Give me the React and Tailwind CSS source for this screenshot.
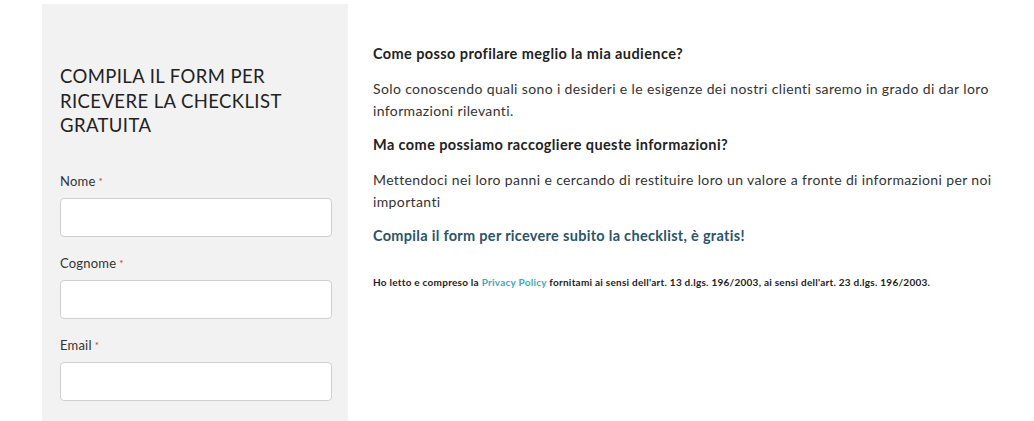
import React from "react";

const font = { fontFamily: "Lato, 'Open Sans', sans-serif" };

function Field({ label }) {
  return (
    <div className="flex flex-col">
      <label className="text-[13px] leading-[18px] text-[#333] mb-[8px] tracking-[0.2px]">
        {label}
        <span className="text-[#c0392b] text-[10px] align-top ml-[3px]">*</span>
      </label>
      <input className="h-[39px] w-[272px] bg-white border border-[#cfcfcf] rounded-[4px] outline-none" />
    </div>
  );
}

export default function App() {
  return (
    <div className="w-[1034px] h-[421px] bg-white overflow-hidden flex" style={font}>
      <div className="ml-[42px] mt-[4px] w-[306px] h-[417px] bg-[#f2f2f2] pl-[18px] pt-[60px]">
        <h2 className="text-[18.5px] leading-[24.5px] text-[#222] w-[270px] tracking-[0.4px]">
          COMPILA IL FORM PER RICEVERE LA CHECKLIST GRATUITA
        </h2>
        <div className="mt-[34px] flex flex-col gap-[17px]">
          <Field label="Nome" />
          <Field label="Cognome" />
          <Field label="Email" />
        </div>
      </div>
      <div className="ml-[25px] pt-[43px] w-[630px] text-[14px] text-[#333] tracking-[0.37px]">
        <p className="font-bold text-[#222] leading-[22px] text-[14.5px] tracking-[0.4px]">Come posso profilare meglio la mia audience?</p>
        <p className="mt-[13px] leading-[22px]">
          Solo conoscendo quali sono i desideri e le esigenze dei nostri clienti saremo in grado di dar loro informazioni rilevanti.
        </p>
        <p className="mt-[12px] font-bold text-[#222] leading-[22px] text-[14.5px] tracking-[0.4px]">Ma come possiamo raccogliere queste informazioni?</p>
        <p className="mt-[13px] leading-[22px]">
          Mettendoci nei loro panni e cercando di restituire loro un valore a fronte di informazioni per noi importanti
        </p>
        <p className="mt-[12px] font-bold text-[#2b5566] leading-[22px] text-[14.5px] tracking-[0.3px]">
          Compila il form per ricevere subito la checklist, è gratis!
        </p>
        <p className="mt-[28px] text-[10px] font-bold text-[#222] leading-[14px] tracking-[0.25px]">
          Ho letto e compreso la <span className="text-[#3fa9b5]">Privacy Policy</span> fornitami ai sensi dell'art. 13 d.lgs. 196/2003, ai sensi dell'art. 23 d.lgs. 196/2003.
        </p>
      </div>
    </div>
  );
}
